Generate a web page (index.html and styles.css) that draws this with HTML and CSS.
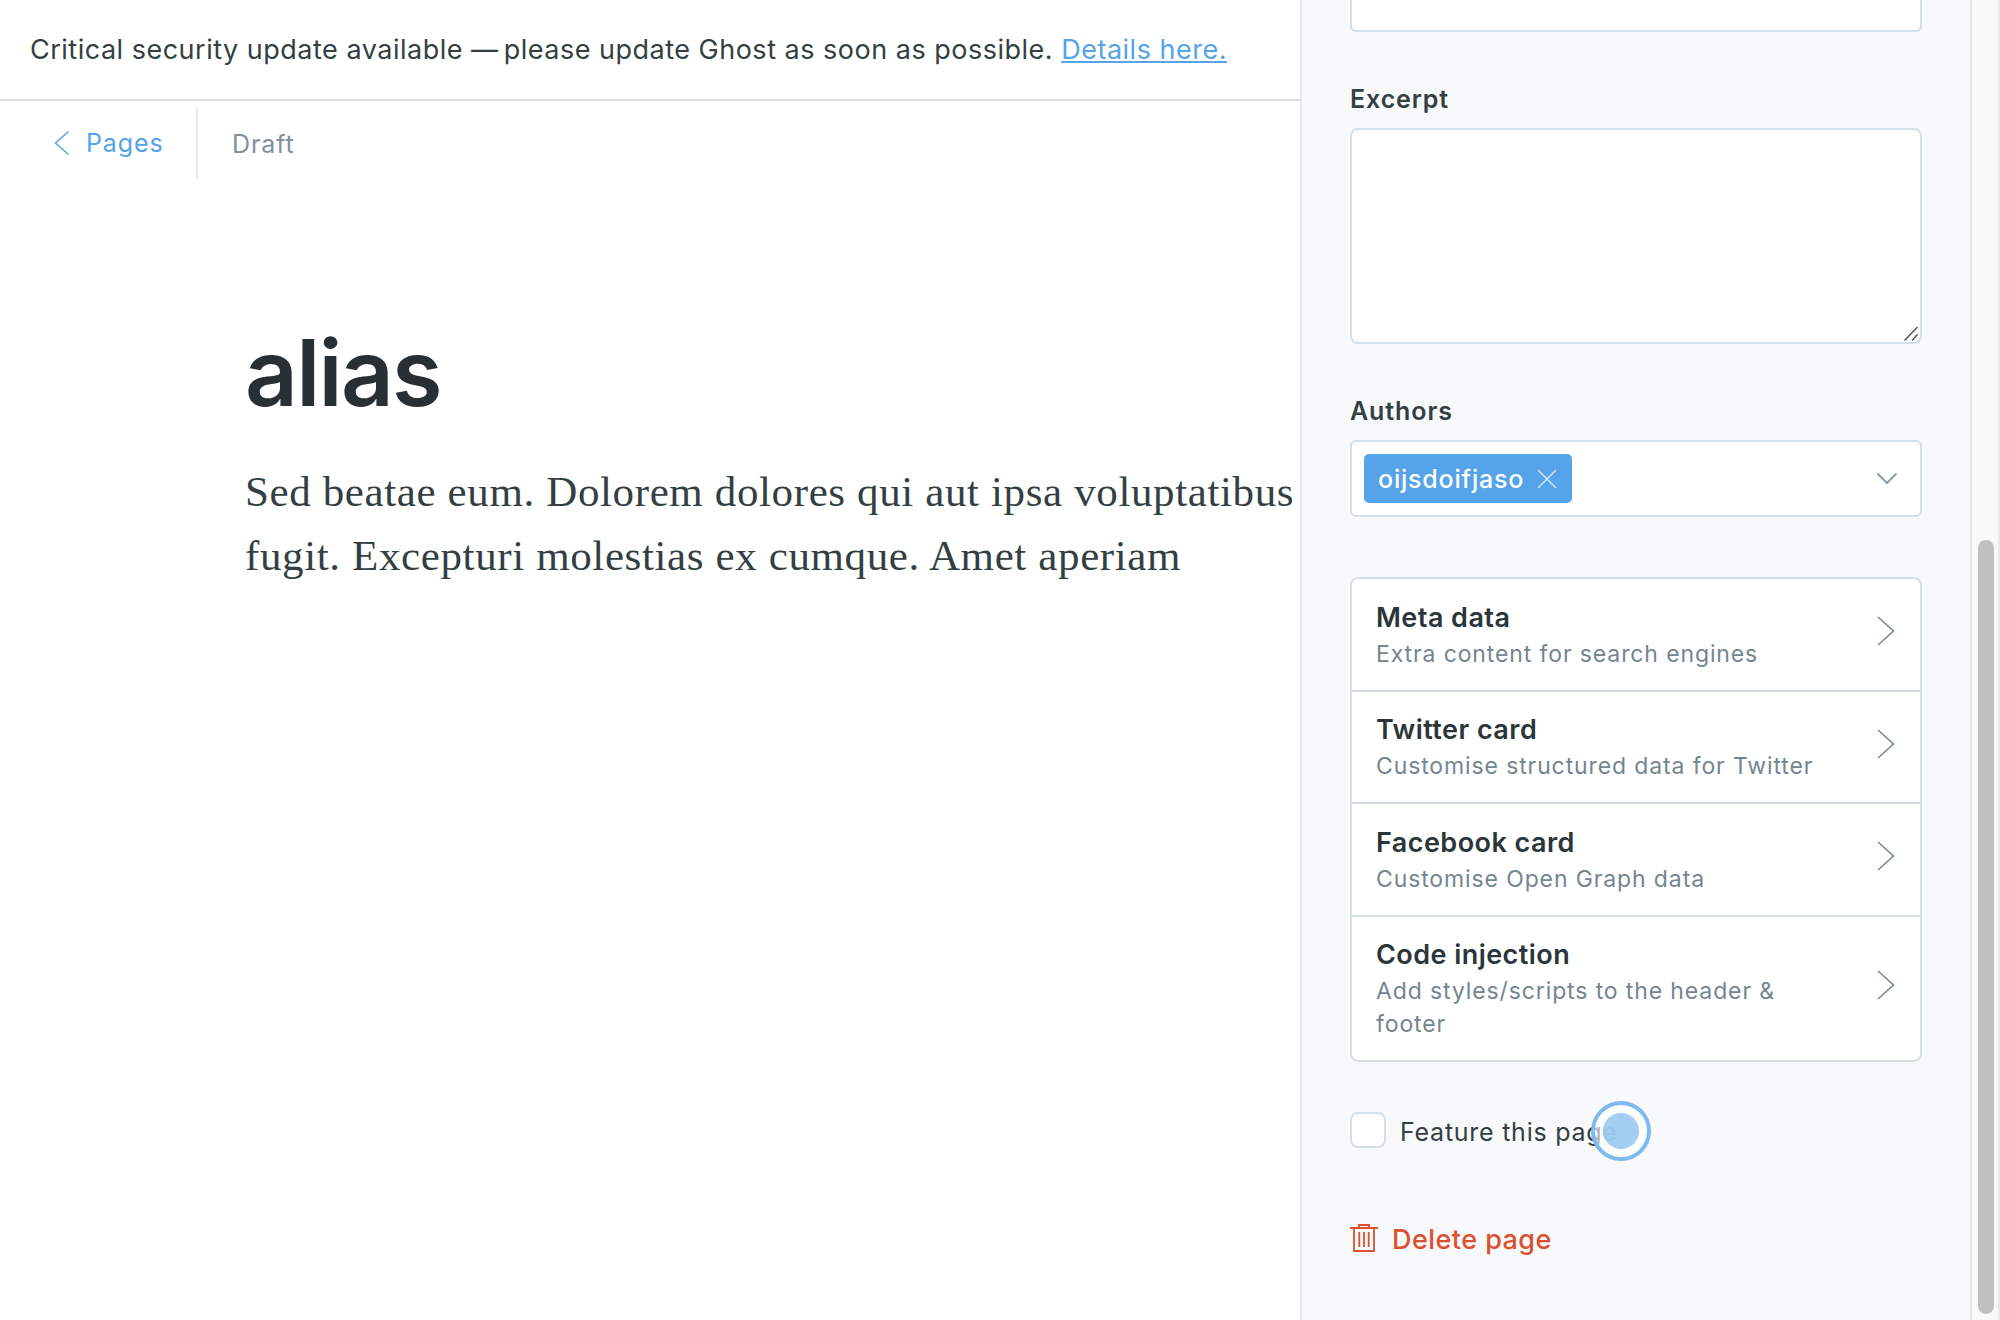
FILE: index.html
```html
<!DOCTYPE html>
<html lang="en">
<head>
<meta charset="utf-8">
<title>Page editor</title>
<link rel="stylesheet" href="styles.css">
</head>
<body>
<div class="app">
  <main class="editor">
    <div class="banner"><p class="banner-text">Critical security update available <span class="dash">—</span> please update Ghost as soon as possible. <a class="banner-link" href="#">Details here.</a></p></div>
    <header class="toolbar">
      <a class="back" href="#">
        <svg class="back-icon" width="16" height="26" viewBox="0 0 16 26"><path d="M14.500 1.500 1.500 13l13 11.500"/></svg>
        <span>Pages</span>
      </a>
      <span class="status">Draft</span>
    </header>
    <article class="content">
      <h1 class="title">alias</h1>
      <p class="body">Sed beatae eum. Dolorem dolores qui aut ipsa voluptatibus<br>fugit. Excepturi molestias ex cumque. Amet aperiam</p>
    </article>
  </main>
  <aside class="settings">
    <div class="field-cut"></div>
    <label class="label label-excerpt">Excerpt</label>
    <div class="excerpt">
      <svg class="grip" width="16" height="16" viewBox="0 0 16 16"><path d="M1.500 15.500l13-13.500M9 15.500l5.500-6"/></svg>
    </div>
    <label class="label label-authors">Authors</label>
    <div class="select">
      <span class="tag">oijsdoifjaso
        <svg class="tag-close" width="20" height="20" viewBox="0 0 20 20"><path d="M1 1l18 18M19 1 1 19"/></svg>
      </span>
      <svg class="caret" width="22" height="14" viewBox="0 0 22 14"><path d="M1.500 1.500 11 11l9.500-9.500"/></svg>
    </div>
    <ul class="menu">
      <li class="item"><div class="item-text"><b class="item-title">Meta data</b><span class="item-sub">Extra content for search engines</span></div><svg class="arrow" width="18" height="30" viewBox="0 0 18 30"><path d="M1 1l15.500 14L1 29"/></svg></li>
      <li class="item"><div class="item-text"><b class="item-title">Twitter card</b><span class="item-sub">Customise structured data for Twitter</span></div><svg class="arrow" width="18" height="30" viewBox="0 0 18 30"><path d="M1 1l15.500 14L1 29"/></svg></li>
      <li class="item"><div class="item-text"><b class="item-title">Facebook card</b><span class="item-sub">Customise Open Graph data</span></div><svg class="arrow" width="18" height="30" viewBox="0 0 18 30"><path d="M1 1l15.500 14L1 29"/></svg></li>
      <li class="item item-tall"><div class="item-text"><b class="item-title">Code injection</b><span class="item-sub">Add styles/scripts to the header &amp;<br>footer</span></div><svg class="arrow" width="18" height="30" viewBox="0 0 18 30"><path d="M1 1l15.500 14L1 29"/></svg></li>
    </ul>
    <label class="feature"><span class="checkbox"></span><span class="feature-text">Feature this page</span><span class="pointer"></span></label>
    <a class="delete" href="#">
      <svg class="trash" width="28" height="28" viewBox="0 0 28 28"><path d="M0 4h28M9 4V1h10v3M4 4v23h20V4M9.300 8v15M14 8v15M18.700 8v15"/></svg>
      <span class="delete-text">Delete page</span>
    </a>
  </aside>
  <div class="scrollbar"><div class="thumb"></div></div>
</div>
</body>
</html>
```
FILE: styles.css
```css
* { box-sizing: border-box; }
body { margin: 0; background: #fff; font-family: Inter, "Liberation Sans", sans-serif; color: #343f44; }
svg { display: block; flex: none; fill: none; }
.app { display: flex; width: 2000px; height: 1320px; overflow: hidden; }
.editor { width: 1300px; flex: none; overflow: hidden; }
.banner { height: 101px; border-bottom: 2px solid #dadddd; padding: 30px 0 0 30px; }
.banner-text { margin: 0; font-size: 27px; line-height: 40px; letter-spacing: 0.5px; white-space: nowrap; }
.dash { margin-right: -3px; }
.banner-link { color: #55a3e8; text-decoration: underline; text-decoration-thickness: 2px; text-underline-offset: 2px; }
.toolbar { display: flex; height: 78px; padding-top: 6px; font-size: 25px; line-height: 36px; letter-spacing: 0.9px; }
.back { display: flex; align-items: center; gap: 16px; width: 198px; height: 72px; padding-left: 54px; border-right: 2px solid #e3e9ed; color: #55a3e8; text-decoration: none; }
.back-icon { stroke: #55a3e8; stroke-width: 1.5; }
.status { padding: 19px 0 0 34px; color: #7f919c; }
.content { padding: 141px 0 0 245px; }
.title { margin: 0; font-size: 92px; line-height: 106px; font-weight: 600; letter-spacing: -1.7px; color: #283034; }
.body { margin: 34px 0 0; font-family: "Liberation Serif", serif; font-size: 43px; line-height: 64px; letter-spacing: 0.62px; white-space: nowrap; }
.settings { display: flex; flex-direction: column; width: 670px; flex: none; padding: 0 48px; border-left: 2px solid #e2eaf1; background: #f7f9fb; }
.field-cut { height: 32px; flex: none; border: 2px solid #d3dfe8; border-top: 0; border-radius: 0 0 6px 6px; background: #fff; }
.label { font-size: 25px; line-height: 36px; font-weight: 600; letter-spacing: 0.9px; }
.label-excerpt { margin-top: 49px; }
.excerpt { display: flex; align-items: flex-end; justify-content: flex-end; height: 216px; margin-top: 11px; padding: 0 1px 1px 0; border: 2px solid #d3dfe8; border-radius: 8px; background: #fff; }
.grip { stroke: #555; stroke-width: 1.5; }
.label-authors { margin-top: 49px; }
.select { display: flex; align-items: center; justify-content: space-between; height: 77px; margin-top: 11px; padding: 0 22px 0 12px; border: 2px solid #d3dfe8; border-radius: 6px; background: #fff; }
.tag { display: flex; align-items: center; justify-content: space-between; width: 208px; height: 49px; padding: 0 15px 0 14px; border-radius: 5px; background: #55a3e8; color: #fff; font-size: 25px; font-weight: 500; letter-spacing: 0.8px; }
.tag-close { stroke: #d4e8f9; stroke-width: 1.5; }
.caret { stroke: #8a9caa; stroke-width: 2; }
.menu { margin: 60px 0 0; padding: 0; border: 2px solid #d3dfe8; border-radius: 8px; background: #fff; list-style: none; }
.item { display: flex; align-items: center; justify-content: space-between; height: 112.5px; padding: 0 25px 0 24px; border-bottom: 2px solid #d3dfe8; }
.item-tall { height: 143px; border-bottom: 0; }
.item-text { display: flex; flex-direction: column; align-items: flex-start; }
.item-title { font-size: 27px; line-height: 36px; font-weight: 600; letter-spacing: 0.45px; color: #2c3539; }
.item-sub { padding-top: 2px; margin-bottom: -2px; font-size: 23px; line-height: 33px; letter-spacing: 0.88px; color: #738690; }
.arrow { margin-bottom: 6px; stroke: #738690; stroke-width: 1.5; }
.feature { position: relative; display: flex; align-items: center; height: 36px; margin-top: 50px; font-size: 25px; letter-spacing: 0.75px; }
.checkbox { width: 36px; height: 36px; margin-right: 14px; border: 2px solid #d3dfe8; border-radius: 8px; background: #fff; }
.feature-text { padding-top: 5px; }
.pointer { position: absolute; left: 241px; top: -11px; width: 60px; height: 60px; border: 4px solid #7fbaee; border-radius: 50%; background: radial-gradient(circle, #9fccf2f2 17.500px, #ffffff99 18.500px); }
.delete { display: flex; align-items: center; gap: 14px; height: 36px; margin-top: 72px; color: #dc5030; font-size: 27px; font-weight: 500; letter-spacing: 0.45px; text-decoration: none; }
.delete-text { padding-top: 3px; }
.trash { stroke: #dc5030; stroke-width: 1.8; }
.scrollbar { width: 30px; flex: none; padding: 540px 4px 0 6px; border-left: 2px solid #e5e5e5; border-right: 2px solid #e9e9e9; background: #f9f9f9; }
.thumb { width: 16px; height: 774px; border-radius: 8px; background: #c0c0c0; }
```
